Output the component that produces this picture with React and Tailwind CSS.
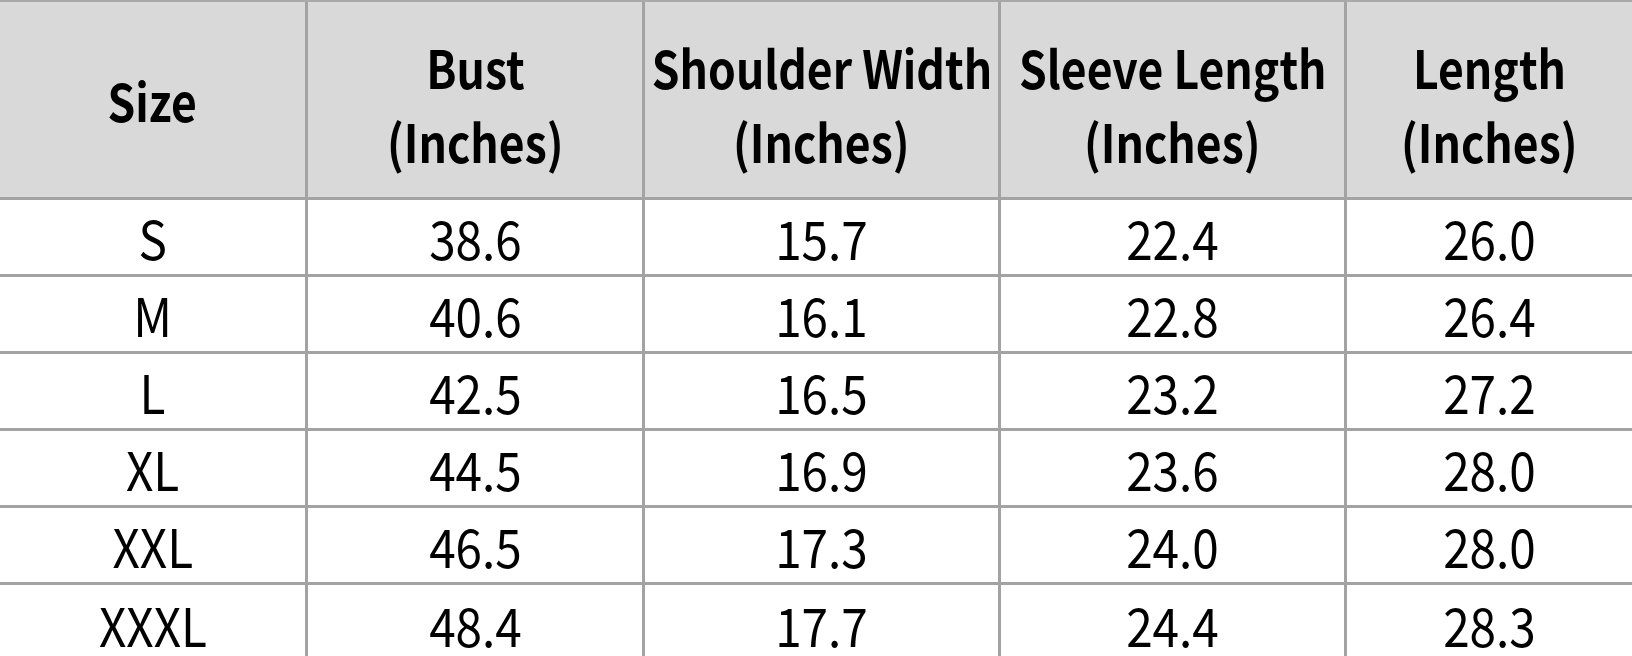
import React from "react";

const headers = [
  ["Size"],
  ["Bust", "(Inches)"],
  ["Shoulder Width", "(Inches)"],
  ["Sleeve Length", "(Inches)"],
  ["Length", "(Inches)"],
];

const rows = [
  ["S", "38.6", "15.7", "22.4", "26.0"],
  ["M", "40.6", "16.1", "22.8", "26.4"],
  ["L", "42.5", "16.5", "23.2", "27.2"],
  ["XL", "44.5", "16.9", "23.6", "28.0"],
  ["XXL", "46.5", "17.3", "24.0", "28.0"],
  ["XXXL", "48.4", "17.7", "24.4", "28.3"],
];

export default function App() {
  return (
    <div
      className="w-[1632px] h-[656px] overflow-hidden bg-white text-black"
      style={{ fontFamily: '"Noto Sans CJK SC", "Noto Sans", sans-serif' }}
    >
      <div className="grid grid-cols-[308px_337px_356px_346px_285px] grid-rows-[198px_77px_77px_77px_77px_77px_80px] border-t-2 border-[#a8a8a8]">
        {headers.map((h, i) => (
          <div
            key={i}
            className={`flex flex-col items-center justify-center bg-[#d9d9d9] border-b-[3px] border-[#a3a3a3] font-bold text-[52px] leading-[74px] whitespace-nowrap ${i === 0 ? "pt-0" : "pt-[8px]"} ${i < 4 ? "border-r-[3px]" : ""}`}
          >
            {h.map((t, j) => (
              <span key={j} className="inline-block scale-x-[0.855]">
                {t}
              </span>
            ))}
          </div>
        ))}
        {rows.map((r, ri) =>
          r.map((c, ci) => (
            <div
              key={ri + "-" + ci}
              className={`flex items-center justify-center text-[53px] leading-none whitespace-nowrap border-[#a3a3a3] ${ci < 4 ? "border-r-[3px]" : ""} ${ri < 5 ? "border-b-[3px]" : "border-b-2 border-b-[#d0d0d0]"}`}
            >
              <span className="inline-block scale-x-[0.9]">{c}</span>
            </div>
          ))
        )}
      </div>
    </div>
  );
}
